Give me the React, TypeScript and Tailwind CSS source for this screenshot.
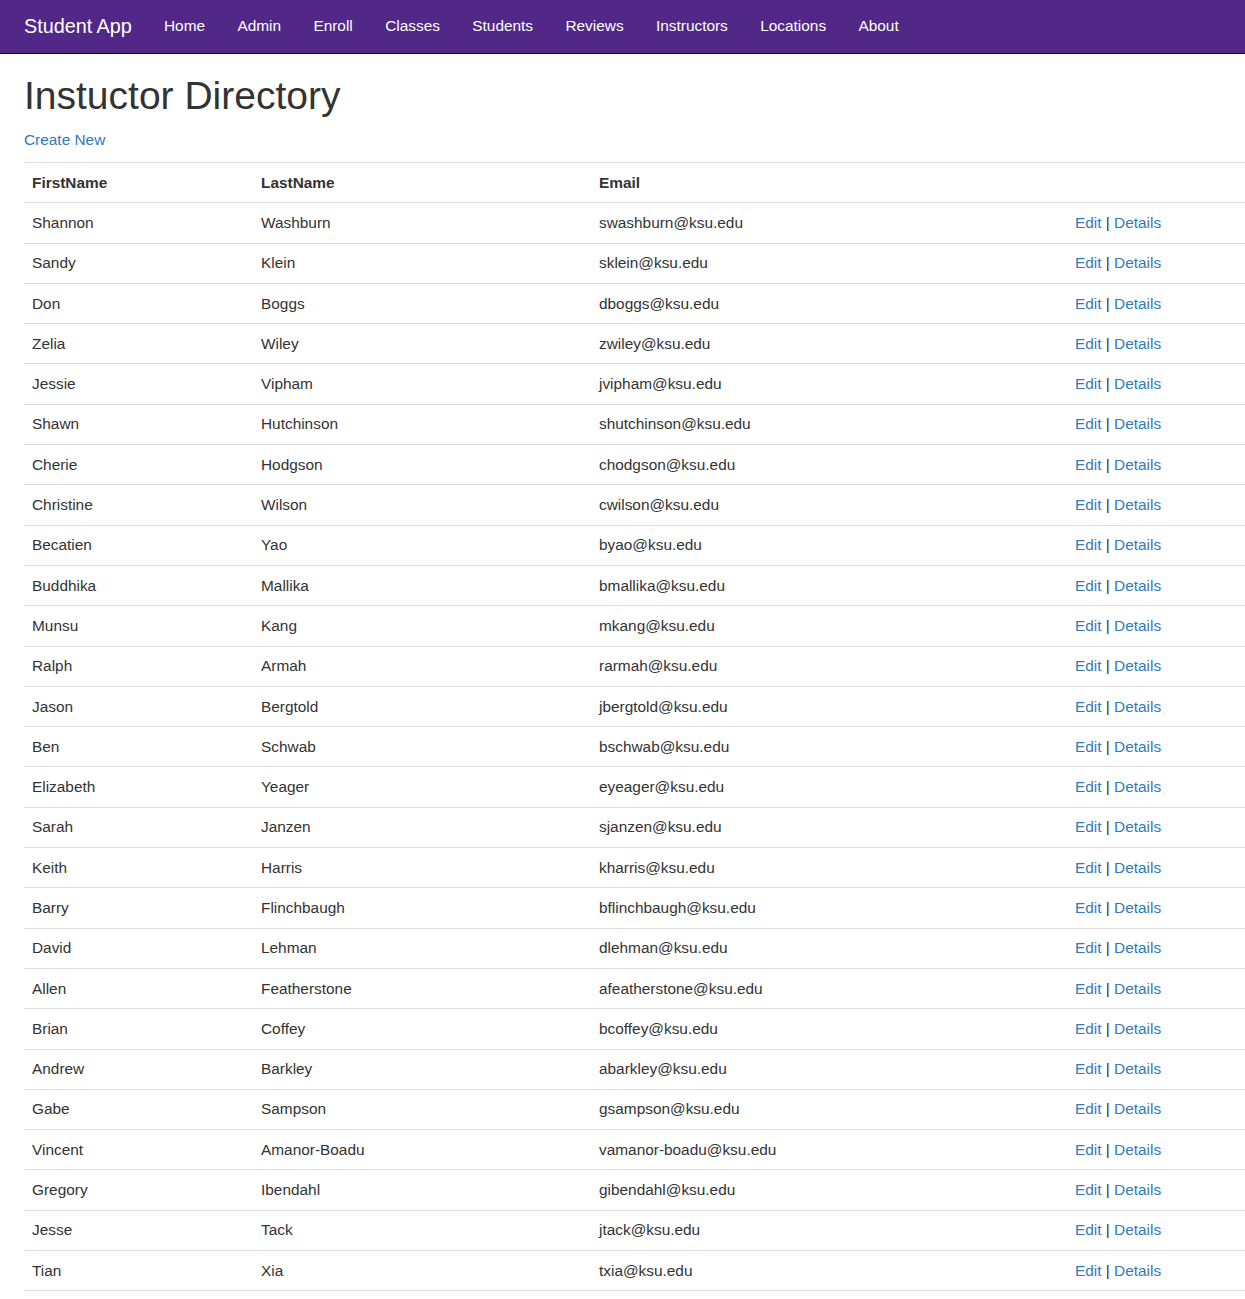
import React from 'react';

const navLinks = ['Home', 'Admin', 'Enroll', 'Classes', 'Students', 'Reviews', 'Instructors', 'Locations', 'About'];

const instructors: [string, string, string][] = [
  ['Shannon', 'Washburn', 'swashburn@ksu.edu'],
  ['Sandy', 'Klein', 'sklein@ksu.edu'],
  ['Don', 'Boggs', 'dboggs@ksu.edu'],
  ['Zelia', 'Wiley', 'zwiley@ksu.edu'],
  ['Jessie', 'Vipham', 'jvipham@ksu.edu'],
  ['Shawn', 'Hutchinson', 'shutchinson@ksu.edu'],
  ['Cherie', 'Hodgson', 'chodgson@ksu.edu'],
  ['Christine', 'Wilson', 'cwilson@ksu.edu'],
  ['Becatien', 'Yao', 'byao@ksu.edu'],
  ['Buddhika', 'Mallika', 'bmallika@ksu.edu'],
  ['Munsu', 'Kang', 'mkang@ksu.edu'],
  ['Ralph', 'Armah', 'rarmah@ksu.edu'],
  ['Jason', 'Bergtold', 'jbergtold@ksu.edu'],
  ['Ben', 'Schwab', 'bschwab@ksu.edu'],
  ['Elizabeth', 'Yeager', 'eyeager@ksu.edu'],
  ['Sarah', 'Janzen', 'sjanzen@ksu.edu'],
  ['Keith', 'Harris', 'kharris@ksu.edu'],
  ['Barry', 'Flinchbaugh', 'bflinchbaugh@ksu.edu'],
  ['David', 'Lehman', 'dlehman@ksu.edu'],
  ['Allen', 'Featherstone', 'afeatherstone@ksu.edu'],
  ['Brian', 'Coffey', 'bcoffey@ksu.edu'],
  ['Andrew', 'Barkley', 'abarkley@ksu.edu'],
  ['Gabe', 'Sampson', 'gsampson@ksu.edu'],
  ['Vincent', 'Amanor-Boadu', 'vamanor-boadu@ksu.edu'],
  ['Gregory', 'Ibendahl', 'gibendahl@ksu.edu'],
  ['Jesse', 'Tack', 'jtack@ksu.edu'],
  ['Tian', 'Xia', 'txia@ksu.edu'],
];

export default function App() {
  return (
    <div className="min-h-screen bg-white text-[#333] text-[15.4px] leading-[22px] font-['Liberation_Sans',Arial,sans-serif]">
      {/* Navbar */}
      <nav className="h-[54px] bg-[#512888] border-b border-black flex items-center pl-6 pb-[2px]">
        <a href="#" className="text-white text-[19.8px] leading-[22px] pr-[16px]">Student App</a>
        <ul className="flex items-center">
          {navLinks.map((l) => (
            <li key={l}>
              <a href="#" className="block px-[16.2px] text-white text-[15.4px] leading-[22px]">{l}</a>
            </li>
          ))}
        </ul>
      </nav>

      <div className="pl-6">
        <h1 className="mt-[20px] mb-[11px] text-[39px] leading-[44px] font-normal text-[#333]">Instuctor Directory</h1>
        <p className="mb-[11px]">
          <a href="#" className="text-[#337ab7]">Create New</a>
        </p>

        <table className="w-full border-collapse table-fixed">
          <colgroup>
            <col className="w-[229px]" />
            <col className="w-[338px]" />
            <col className="w-[476px]" />
            <col />
          </colgroup>
          <thead>
            <tr className="h-[40.3px] border-t border-b border-[#ddd]">
              <th className="text-left font-bold px-2 align-middle">FirstName</th>
              <th className="text-left font-bold px-2 align-middle">LastName</th>
              <th className="text-left font-bold px-2 align-middle">Email</th>
              <th className="px-2"></th>
            </tr>
          </thead>
          <tbody>
            {instructors.map(([first, last, email]) => (
              <tr key={email} className="h-[40.3px] border-b border-[#ddd]">
                <td className="px-2 align-middle">{first}</td>
                <td className="px-2 align-middle">{last}</td>
                <td className="px-2 align-middle">{email}</td>
                <td className="px-2 align-middle">
                  <a href="#" className="text-[#337ab7]">Edit</a> |{' '}
                  <a href="#" className="text-[#337ab7]">Details</a>
                </td>
              </tr>
            ))}
          </tbody>
        </table>
        <div className="h-[10px]" />
      </div>
    </div>
  );
}
